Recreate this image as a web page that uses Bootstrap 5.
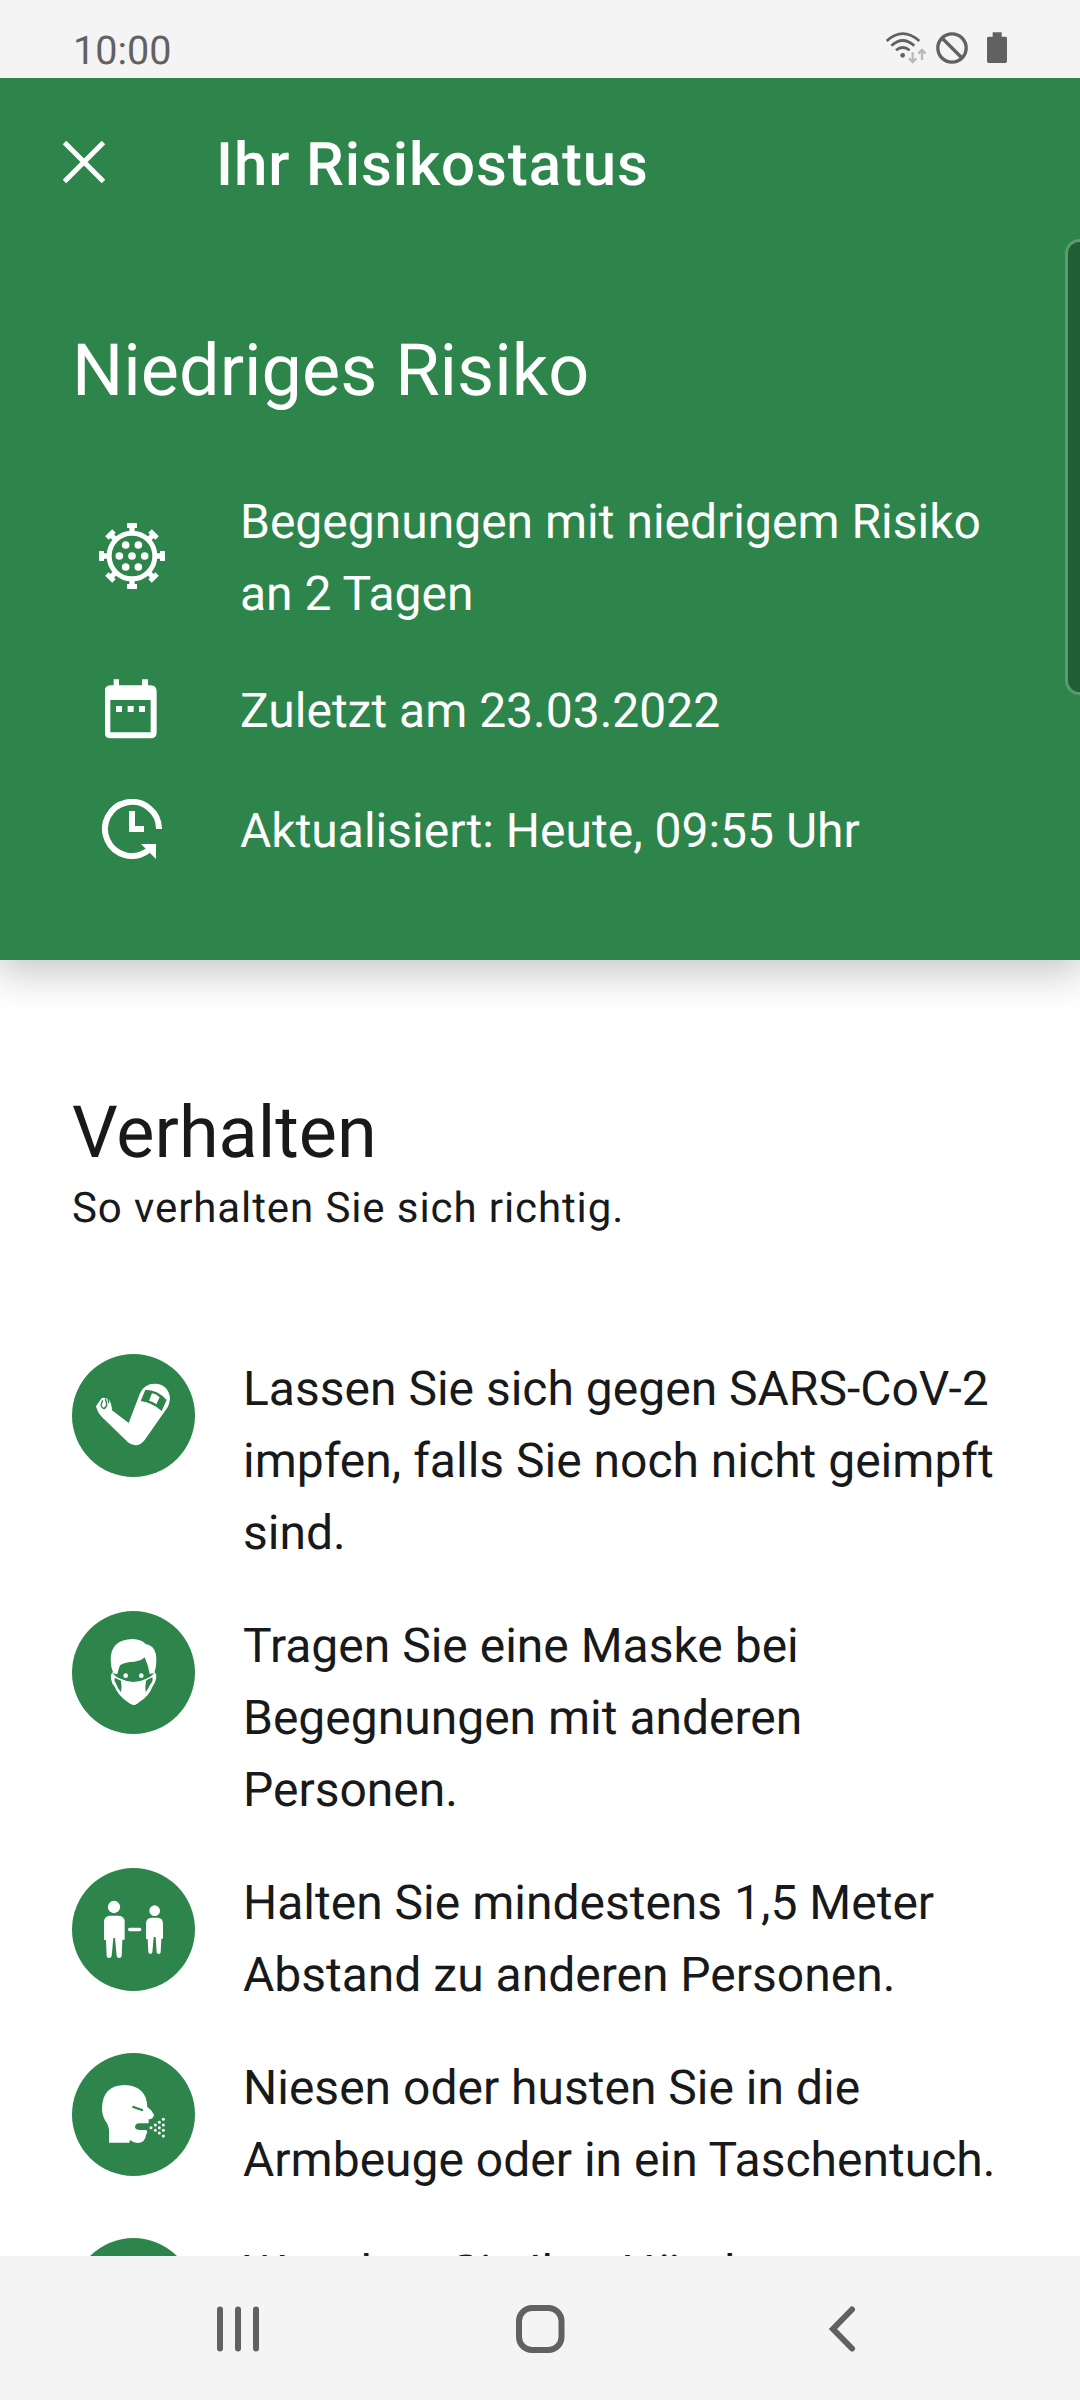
<!DOCTYPE html>
<html lang="de">
<head>
<meta charset="utf-8">
<meta name="viewport" content="width=device-width, initial-scale=1">
<title>Ihr Risikostatus</title>
<link href="https://cdn.jsdelivr.net/npm/bootstrap@5.3.0/dist/css/bootstrap.min.css" rel="stylesheet">
<style>
  :root { --risk-green: #2e854b; --bar-grey: #f4f4f4; --icon-grey: #616161; --ink: #17191a; }
  body { font-family: Roboto, "Liberation Sans", sans-serif; color: var(--ink); font-size: 48px; line-height: 72px; text-rendering: geometricPrecision; }
  .screen { width: 1080px; height: 2400px; }
  .status-bar { height: 78px; background: var(--bar-grey); color: var(--icon-grey); padding: 22px 73px 0 73px; z-index: 2; }
  .clock { font-size: 39.5px; line-height: 57px; }
  .status-icons { padding-top: 10px; }
  .risk-panel { height: 882px; background: var(--risk-green); box-shadow: 0 12px 36px 4px rgba(0,0,0,.2); z-index: 1; }
  .app-bar { height: 168px; padding-left: 63px; gap: 111px; }
  .app-title { font-size: 60px; line-height: 72px; font-weight: 500; letter-spacing: .9px; padding-top: 6px; }
  .headline { font-size: 72px; line-height: 96px; font-weight: 400; }
  .risk-headline { padding: 77px 72px 0; }
  .risk-facts { padding: 67px 72px 0 72px; gap: 45px; }
  .risk-facts li:last-child { margin-top: 3px; }
  .fact-icon { width: 120px; margin: -4px 48px 0 0; }
  .edge-handle { right: -14px; top: 161px; width: 29px; height: 456px; border: 3px solid #589c6f; border-radius: 15px; background: #205f33; }
  .behaviour { padding: 125px 72px 0; }
  .sub-line { font-size: 42px; line-height: 56px; letter-spacing: .9px; }
  .tips { margin-top: 117px; gap: 41px; }
  .tip-icon { width: 123px; height: 123px; border-radius: 50%; background: var(--risk-green); }
  .tip-text { margin: -1px 0 1px; }
  .nav-strip { height: 144px; background: var(--bar-grey); z-index: 2; }
</style>
</head>
<body>
<div class="screen d-flex flex-column overflow-hidden bg-white">

  <header class="status-bar position-relative d-flex justify-content-between flex-shrink-0">
    <span class="clock">10:00</span>
    <div class="status-icons d-flex align-items-start">
      <svg width="42" height="32" viewBox="75 96 126 96" fill="none">
        <g stroke="#616161" stroke-width="8">
          <path d="M80 123Q128 79 178 123"/><path d="M94 137Q128 106 163 137"/><path d="M108 151Q128 134 149 151"/>
        </g>
        <circle cx="128" cy="166" r="7" fill="#616161"/>
        <g stroke="#b9b9b9" stroke-width="7"><path d="M158 157V185M147 175L158 186L169 175M186 180V151M175 161L186 150L197 161"/></g>
      </svg>
      <svg width="32" height="32" viewBox="227 96 96 96" fill="none" stroke="#616161" stroke-width="10" style="margin-left:9px">
        <circle cx="275" cy="144" r="42.500"/><path d="M245 114L305 174"/>
      </svg>
      <svg width="20" height="32" viewBox="381 96 60 96" fill="#616161" style="margin-left:19px">
        <path d="M398 97H425V110H437Q441 110 441 115V184Q441 189 436 189H386Q381 189 381 184V115Q381 110 386 110H398Z"/>
      </svg>
    </div>
  </header>

  <section class="risk-panel position-relative flex-shrink-0 text-white">
    <div class="app-bar d-flex align-items-center">
      <svg width="42" height="42" viewBox="0 0 42 42" stroke="#fff" stroke-width="5"><path d="M1.500 1.500L40.500 40.500M40.500 1.500L1.500 40.500"/></svg>
      <h1 class="app-title mb-0">Ihr Risikostatus</h1>
    </div>
    <h2 class="headline risk-headline mb-0">Niedriges Risiko</h2>
    <ul class="risk-facts list-unstyled d-flex flex-column mb-0">
      <li class="d-flex align-items-center">
        <span class="fact-icon d-flex justify-content-center">
          <svg width="66" height="66" viewBox="117 129 198 198" fill="#fff">
            <circle cx="216" cy="228" r="68.500" fill="none" stroke="#fff" stroke-width="15"/>
            <g id="spikes"><path id="spike" d="M201 129H231V144H224V156H208V144H201Z"/>
              <use href="#spike" transform="rotate(90 216 228)"/><use href="#spike" transform="rotate(180 216 228)"/><use href="#spike" transform="rotate(270 216 228)"/></g>
            <use href="#spikes" transform="rotate(45 216 228)"/>
            <circle cx="197" cy="195" r="11.500"/><circle cx="235" cy="195" r="11.500"/><circle cx="178" cy="228" r="11.500"/><circle cx="216" cy="228" r="11.500"/><circle cx="254" cy="228" r="11.500"/><circle cx="197" cy="261" r="11.500"/><circle cx="235" cy="261" r="11.500"/>
          </svg>
        </span>
        <span>Begegnungen mit niedrigem Risiko<br>an 2 Tagen</span>
      </li>
      <li class="d-flex align-items-center">
        <span class="fact-icon d-flex justify-content-center">
          <svg width="54" height="60" viewBox="135 594 162 180" fill="#fff">
            <path fill-rule="evenodd" d="M161 595H177V613H246V595H264V613H271Q290 613 290 631V754Q290 772 272 772H152Q134 772 134 754V631Q134 613 153 613H161ZM151 657V754H272V657Z"/>
            <path d="M168 675h18v18h-18zM203 675h18v18h-18zM237 675h18v18h-18z"/>
          </svg>
        </span>
        <span>Zuletzt am 23.03.2022</span>
      </li>
      <li class="d-flex align-items-center">
        <span class="fact-icon d-flex justify-content-center">
          <svg width="60" height="60" viewBox="126 954 180 180">
            <path d="M297 1044A81 81 0 1 0 264 1109" fill="none" stroke="#fff" stroke-width="18"/>
            <path d="M207 990H225V1035H252V1053H207ZM243 1089H288V1134Z" fill="#fff"/>
          </svg>
        </span>
        <span>Aktualisiert: Heute, 09:55 Uhr</span>
      </li>
    </ul>
    <div class="edge-handle position-absolute"></div>
  </section>

  <main class="behaviour flex-grow-1 overflow-hidden">
    <h2 class="headline mb-0">Verhalten</h2>
    <p class="sub-line mb-0">So verhalten Sie sich richtig.</p>
    <ul class="tips list-unstyled d-flex flex-column mb-0">
      <li class="d-flex align-items-start gap-5">
        <svg class="tip-icon flex-shrink-0" viewBox="66 72 369 369" fill="#fff">
          <path d="M138 229L153 207Q158 202 163 204L175 207Q185 217 186 241L236 279L270 190Q282 161 315 161Q354 162 360 203Q359 226 347 240L284 330Q272 346 256 346Q242 345 234 337L158 263Q143 250 138 229Z"/>
          <path d="M286 179Q323 179 350 210L335 243Q307 218 272 213Z" fill="#2e854b"/>
          <path d="M306 190Q319 192 329 202L319 223Q309 214 297 212Z"/>
          <path d="M158 211L153 226Q155 234 162 236Q171 230 170 222L166 207M174 206L176 219" fill="none" stroke="#2e854b" stroke-width="4"/>
        </svg>
        <span class="tip-text">Lassen Sie sich gegen SARS-CoV-2<br>impfen, falls Sie noch nicht geimpft<br>sind.</span>
      </li>
      <li class="d-flex align-items-start gap-5">
        <svg class="tip-icon flex-shrink-0" viewBox="66 63 369 369" fill="#fff">
          <path d="M190 250Q182 232 182 208Q183 148 248 147Q275 148 288 163Q320 168 319 212Q319 232 313 249L299 252Q296 238 294 229L284 202Q272 213 253 215Q226 215 210 226Q206 235 202 253Z"/>
          <circle cx="227" cy="257" r="7"/><circle cx="274" cy="257" r="7"/>
          <path fill-rule="evenodd" d="M187 247Q196 262 214 267Q232 276 250 276Q269 276 287 267Q305 261 314 247Q322 256 317 270Q315 280 309 287Q296 320 269 335Q258 345 250 345Q243 345 233 336Q206 319 193 289Q186 282 184 270Q180 257 187 247ZM194 263Q191 273 199 283Q203 296 213 307Q216 289 213 272Q203 267 194 263ZM307 262Q297 266 288 272Q285 289 287 307Q296 295 301 283Q310 274 307 262Z"/>
        </svg>
        <span class="tip-text">Tragen Sie eine Maske bei<br>Begegnungen mit anderen<br>Personen.</span>
      </li>
      <li class="d-flex align-items-start gap-5">
        <svg class="tip-icon flex-shrink-0" viewBox="66 54 369 369" fill="#fff">
          <circle cx="192" cy="171" r="18.500"/><circle cx="314" cy="182" r="16"/>
          <path d="M162 217Q162 197 181 197H205Q224 197 224 217V269H217L215 318Q214 324 207 324Q201 324 200 318L195 264H190L185 318Q184 324 177 324Q170 324 170 318L168 270H162Z"/>
          <path d="M288 221Q288 203 305 203H323Q339 203 339 221V266H334L332 307Q331 312 326 312Q321 312 320 307L317 261H311L307 307Q306 312 301 312Q296 312 295 307L293 267H288Z"/>
          <rect x="234" y="233" width="40" height="11" rx="5.500"/>
        </svg>
        <span class="tip-text">Halten Sie mindestens 1,5 Meter<br>Abstand zu anderen Personen.</span>
      </li>
      <li class="d-flex align-items-start gap-5">
        <svg class="tip-icon flex-shrink-0" viewBox="66 69 369 369" fill="#fff">
          <path d="M177 338V304Q177 286 166 272Q156 256 156 235Q157 166 224 165Q290 168 292 231Q305 239 312 254Q311 266 296 268V280H267Q255 281 255 292Q257 300 270 300H287Q293 301 291 309L288 314Q286 338 262 339Q249 337 240 330L238 338Z"/>
          <path d="M250 231L276 240" stroke="#2e854b" stroke-width="7" stroke-linecap="round"/>
          <circle cx="303" cy="293" r="4.500"/><circle cx="316" cy="285" r="4.500"/><circle cx="316" cy="301" r="4.500"/><circle cx="328" cy="277" r="4.500"/><circle cx="328" cy="293" r="4.500"/><circle cx="328" cy="309" r="4.500"/><circle cx="340" cy="268" r="4.500"/><circle cx="340" cy="285" r="4.500"/><circle cx="340" cy="301" r="4.500"/><circle cx="340" cy="318" r="4.500"/>
        </svg>
        <span class="tip-text">Niesen oder husten Sie in die<br>Armbeuge oder in ein Taschentuch.</span>
      </li>
      <li class="d-flex align-items-start gap-5">
        <span class="tip-icon flex-shrink-0"></span>
        <span class="tip-text">Waschen Sie Ihre Hände</span>
      </li>
    </ul>
  </main>

  <nav class="nav-strip flex-shrink-0">
    <svg class="d-block" width="1080" height="144" viewBox="0 0 1080 144" fill="none" stroke="#616161" stroke-width="6">
      <path d="M220 53.500V92.500M238 53.500V92.500M256 53.500V92.500" stroke-linecap="round"/>
      <rect x="519" y="52" width="42.500" height="42" rx="13"/>
      <path d="M852 53.500L833 73L852 92.500" stroke-linecap="round"/>
    </svg>
  </nav>
</div>
<script src="https://cdn.jsdelivr.net/npm/bootstrap@5.3.0/dist/js/bootstrap.bundle.min.js"></script>
</body>
</html>
